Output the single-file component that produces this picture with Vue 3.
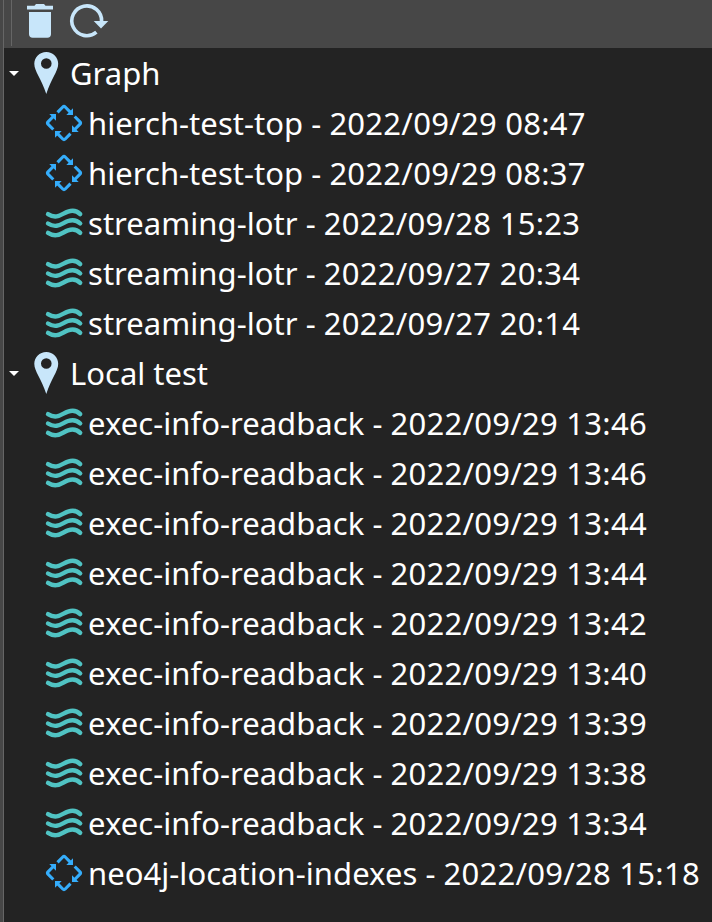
<script setup>
const groups = [
  {
    name: 'Graph',
    items: [
      { kind: 'batch', name: 'hierch-test-top', date: '2022/09/29 08:47' },
      { kind: 'batch', name: 'hierch-test-top', date: '2022/09/29 08:37' },
      { kind: 'stream', name: 'streaming-lotr', date: '2022/09/28 15:23' },
      { kind: 'stream', name: 'streaming-lotr', date: '2022/09/27 20:34' },
      { kind: 'stream', name: 'streaming-lotr', date: '2022/09/27 20:14' },
    ],
  },
  {
    name: 'Local test',
    items: [
      ...['13:46', '13:46', '13:44', '13:44', '13:42', '13:40', '13:39', '13:38', '13:34'].map((time) => ({
        kind: 'stream',
        name: 'exec-info-readback',
        date: `2022/09/29 ${time}`,
      })),
      { kind: 'batch', name: 'neo4j-location-indexes', date: '2022/09/28 15:18' },
    ],
  },
]
const turns = [0, 90, 180, 270]
</script>

<template>
  <div class="panel">
    <header class="toolbar">
      <button class="tool" aria-label="Delete">
        <svg width="28" height="36" viewBox="0 0 28 36">
          <path d="M1 3.7H8.5L10 2H18L19.5 3.7H27V7.4H1Z" />
          <path d="M3 10H25V32Q25 35.7 21.3 35.7H6.7Q3 35.7 3 32Z" />
        </svg>
      </button>
      <button class="tool" aria-label="Refresh">
        <svg width="42" height="38" viewBox="0 0 42 38">
          <path class="ring" d="M28.4 30.1A14.9 14.9 0 1 1 33.6 19.5" />
          <path d="M25.7 19H40.3L33 26.4Z" />
        </svg>
      </button>
    </header>
    <ul class="tree">
      <li v-for="group in groups" :key="group.name">
        <div class="row group">
          <svg class="caret" width="12" height="8" viewBox="0 0 12 8"><path d="M1 2H11L6 7Z" /></svg>
          <svg class="pin" width="26" height="44" viewBox="0 0 26 44">
            <path fill-rule="evenodd" d="M13.3 0.9C6.5 0.9 1.3 6 1.3 12.8C1.3 20.5 8.5 28 13.3 43C18 28 25.2 20.5 25.2 12.8C25.2 6 20 0.9 13.3 0.9ZM13.3 7.2A5.3 5.3 0 1 1 13.3 17.8A5.3 5.3 0 1 1 13.3 7.2Z" />
          </svg>
          <span>{{ group.name }}</span>
        </div>
        <ul class="children">
          <li v-for="(item, i) in group.items" :key="i" class="row item">
            <svg v-if="item.kind === 'stream'" class="stream" width="40" height="40" viewBox="0 0 40 40">
              <path v-for="y in [0, 9.4, 18.8]" :key="y" :transform="`translate(0 ${y})`" d="M4 11.1C13 16.9 18 10.6 24 8.6C29 6.9 33.5 8.3 36.2 11.1" />
            </svg>
            <svg v-else class="batch" width="40" height="40" viewBox="-20 -20 40 40">
              <g v-for="turn in turns" :key="turn" :transform="`rotate(${turn})`">
                <path class="line" d="M-6.5-10.7L-1.2-16Q0-17.2 1.2-16L6.5-10.7" />
                <path class="head" d="M9-14.7V-8H2.3Z" />
              </g>
            </svg>
            <span class="name">{{ item.name }} - </span><span class="date">{{ item.date }}</span>
          </li>
        </ul>
      </li>
    </ul>
  </div>
</template>

<style>
body {
  margin: 0;
  background: #232323;
}
</style>

<style scoped>
.panel {
  box-sizing: border-box;
  height: 922px;
  overflow: hidden;
  border-left: 3px solid #474747;
  background: #232323;
  color: #fff;
  font: 31px/50px "Noto Sans", sans-serif;
}
.toolbar {
  box-sizing: border-box;
  display: flex;
  align-items: flex-start;
  height: 48px;
  padding: 2px 0 0 22px;
  gap: 14px;
  border-left: 1px solid #666;
  background: linear-gradient(#666, #666) 7px 0 / 1px 46px no-repeat #474747;
}
.tool {
  display: flex;
  margin: 0;
  padding: 0;
  border: 0;
  background: none;
  fill: #c8e6fa;
}
.ring {
  fill: none;
  stroke: #c8e6fa;
  stroke-width: 3.6;
}
.tree,
.children {
  margin: 0;
  padding: 0;
  list-style: none;
}
.tree {
  height: 874px;
  border-left: 1px solid #666;
}
.row {
  display: flex;
  align-items: center;
  height: 50px;
  white-space: pre;
}
.row svg {
  flex: none;
}
.group {
  padding-left: 4px;
}
.caret {
  fill: #fff;
}
.pin {
  margin: 0 11px 0 13px;
  fill: #c8e6fa;
}
.item {
  padding-left: 40px;
}
.item svg {
  margin-right: 4px;
}
.name {
  letter-spacing: 0.04px;
}
.date {
  letter-spacing: 0.26px;
}
.stream {
  fill: none;
  stroke: #50c3c3;
  stroke-width: 4.4;
  stroke-linecap: round;
}
.line {
  fill: none;
  stroke: #35adfb;
  stroke-width: 3.1;
}
.head {
  fill: #35adfb;
}
</style>
